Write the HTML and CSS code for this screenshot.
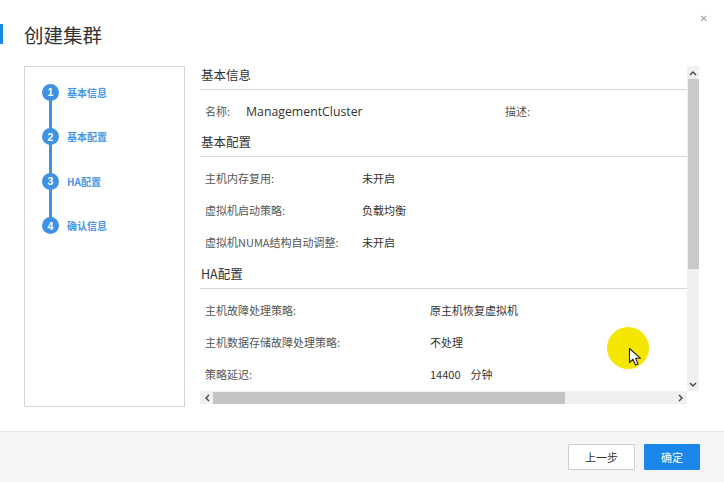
FILE: index.html
```html
<!DOCTYPE html>
<html lang="zh-CN">
<head>
<meta charset="utf-8">
<title>创建集群</title>
<link rel="stylesheet" href="styles.css">
</head>
<body>
<div class="dialog">
  <header class="header">
    <span class="title">创建集群</span>
    <span class="close">&#x2715;</span>
  </header>
  <main class="main">
    <nav class="steps">
      <div class="step"><span class="dot">1</span><span class="step-label">基本信息</span></div>
      <div class="step"><span class="dot">2</span><span class="step-label">基本配置</span></div>
      <div class="step"><span class="dot">3</span><span class="step-label">HA配置</span></div>
      <div class="step last"><span class="dot">4</span><span class="step-label">确认信息</span></div>
    </nav>
    <section class="pane">
      <div class="pane-row">
        <div class="content">
          <div class="sec-title">基本信息</div>
          <div class="sec-body">
            <div class="row">
              <span class="lbl w-name">名称:</span><span class="val strong w-cluster">ManagementCluster</span><span class="lbl">描述:</span>
            </div>
          </div>
          <div class="sec-title">基本配置</div>
          <div class="sec-body">
            <div class="row"><span class="lbl w-mid">主机内存复用:</span><span class="val">未开启</span></div>
            <div class="row"><span class="lbl w-mid">虚拟机启动策略:</span><span class="val">负载均衡</span></div>
            <div class="row"><span class="lbl w-mid">虚拟机NUMA结构自动调整:</span><span class="val">未开启</span></div>
          </div>
          <div class="sec-title sec-ha">HA配置</div>
          <div class="sec-body">
            <div class="row"><span class="lbl w-wide">主机故障处理策略:</span><span class="val">原主机恢复虚拟机</span></div>
            <div class="row"><span class="lbl w-wide">主机数据存储故障处理策略:</span><span class="val">不处理</span></div>
            <div class="row"><span class="lbl w-wide">策略延迟:</span><span class="val"><span class="num">14400</span>分钟</span></div>
          </div>
        </div>
        <div class="vscroll">
          <span class="sb-btn up">
            <svg width="8" height="6" viewBox="0 0 8 6"><path d="M1 5 L4 2 L7 5" fill="none" stroke="#444" stroke-width="1.4"/></svg>
          </span>
          <span class="vthumb"></span>
          <span class="vtrack"></span>
          <span class="sb-btn down">
            <svg width="8" height="6" viewBox="0 0 8 6"><path d="M1 1 L4 4 L7 1" fill="none" stroke="#444" stroke-width="1.4"/></svg>
          </span>
        </div>
      </div>
      <div class="hscroll">
        <span class="sb-btn left">
          <svg width="6" height="8" viewBox="0 0 6 8"><path d="M5 1 L2 4 L5 7" fill="none" stroke="#444" stroke-width="1.4"/></svg>
        </span>
        <span class="hthumb"></span>
        <span class="htrack"></span>
        <span class="sb-btn right">
          <svg width="6" height="8" viewBox="0 0 6 8"><path d="M1 1 L4 4 L1 7" fill="none" stroke="#444" stroke-width="1.4"/></svg>
        </span>
      </div>
    </section>
  </main>
  <footer class="footer">
    <button class="btn">上一步</button>
    <button class="btn primary">确定</button>
  </footer>
  <div class="pointer">
    <svg width="16" height="20" viewBox="0 0 16 20"><path d="M1.5 1.5 L1.5 15.5 L5 12.2 L7.5 18 L10 17 L7.6 11.3 L12.5 11.3 Z" fill="#fff" stroke="#222" stroke-width="1.1" stroke-linejoin="round"/></svg>
  </div>
</div>
</body>
</html>
```

FILE: styles.css
```css
* { box-sizing: border-box; }
html, body { margin: 0; padding: 0; background: #fff; }
body {
  font-family: "Noto Sans CJK SC", "Noto Sans", "Liberation Sans", sans-serif;
  color: #333;
}
.dialog {
  position: relative;
  width: 724px;
  height: 482px;
  display: flex;
  flex-direction: column;
  overflow: hidden;
}
.header {
  position: relative;
  height: 66px;
  flex: none;
  display: flex;
  align-items: center;
  padding: 3px 0 0 24px;
}
.header::before {
  content: "";
  position: absolute;
  left: 0;
  top: 24px;
  width: 3px;
  height: 20px;
  background: #1e88e5;
}
.title {
  font-size: 19.5px;
  line-height: 22px;
  color: #333;
}
.close {
  position: absolute;
  right: 16px;
  top: 13px;
  font-size: 10px;
  color: #a0a0a0;
  font-family: "DejaVu Sans", sans-serif;
}
.main {
  height: 341px;
  flex: none;
  display: flex;
  padding-left: 24px;
  gap: 7px;
}
.steps {
  width: 161px;
  height: 341px;
  border: 1px solid #d4d4d4;
  padding: 3px 0 0 17px;
  display: flex;
  flex-direction: column;
}
.step {
  position: relative;
  height: 44.5px;
  display: flex;
  align-items: center;
  gap: 8px;
}
.step:not(.last)::after {
  content: "";
  position: absolute;
  left: 7px;
  top: 22px;
  width: 3px;
  height: 45px;
  background: #3f91e4;
}
.dot {
  position: relative;
  z-index: 1;
  width: 17px;
  height: 17px;
  border-radius: 50%;
  background: #3f91e4;
  color: #fff;
  font-family: "Liberation Sans", sans-serif;
  font-weight: bold;
  font-size: 10.5px;
  display: flex;
  align-items: center;
  justify-content: center;
}
.step-label {
  font-size: 10px;
  font-weight: bold;
  color: #4b95e3;
}
.pane {
  width: 507px;
  height: 338px;
  display: flex;
  flex-direction: column;
}
.pane-row {
  flex: 1;
  display: flex;
  min-height: 0;
}
.content {
  flex: 1;
  padding-left: 8px;
  overflow: hidden;
}
.sec-title {
  font-size: 12.5px;
  line-height: 17px;
  padding: 0 0 6px 1px;
  border-bottom: 1px solid #d6d6d6;
  color: #333;
}
.sec-title.sec-ha { margin-top: 1px; }
.sec-body {
  padding: 5px 0 6px 5px;
}
.row {
  height: 32px;
  display: flex;
  align-items: center;
  font-size: 11px;
}
.lbl { color: #555; }
.val { color: #333; }
.val.strong { font-size: 12.3px; font-family: "Open Sans", "Noto Sans", sans-serif; color: #333; }
.num { margin-right: 10px; }
.w-name { width: 41px; }
.w-cluster { width: 259px; }
.w-mid { width: 157px; }
.w-wide { width: 225px; }
.vscroll {
  width: 12px;
  flex: none;
  display: flex;
  flex-direction: column;
  background: #f0f0f0;
}
.sb-btn {
  flex: none;
  width: 12px;
  height: 13px;
  display: flex;
  align-items: center;
  justify-content: center;
  background: #f0f0f0;
}
.vthumb {
  height: 190px;
  flex: none;
  background: #c9c9c9;
  margin: 0 0.5px;
}
.vtrack { flex: 1; }
.hscroll {
  height: 13px;
  flex: none;
  margin: 0 12px 0 8px;
  display: flex;
  background: #f0f0f0;
}
.hscroll .sb-btn { height: 13px; width: 13px; }
.hthumb {
  width: 352px;
  flex: none;
  background: #c4c4c4;
  margin: 0.5px 0;
}
.htrack { flex: 1; }
.footer {
  margin-top: auto;
  height: 51px;
  flex: none;
  background: #f5f5f5;
  border-top: 1px solid #e6e6e6;
  display: flex;
  align-items: center;
  justify-content: flex-end;
  gap: 9px;
  padding: 0 24px 0 0;
}
.btn {
  height: 26px;
  border: 1px solid #cfcfcf;
  background: #fff;
  color: #333;
  font-family: "Noto Sans CJK SC", sans-serif;
  font-size: 11px;
  padding: 0;
  border-radius: 1px;
}
.btn:first-child { width: 67px; }
.btn.primary {
  width: 56px;
  background: #1a87e9;
  border-color: #1a87e9;
  color: #fff;
}
.pointer {
  position: absolute;
  left: 607px;
  top: 327px;
  width: 42px;
  height: 42px;
  border-radius: 50%;
  background: #f5e600;
  padding: 20px 0 0 21px;
}
.pointer svg { display: block; }
```
